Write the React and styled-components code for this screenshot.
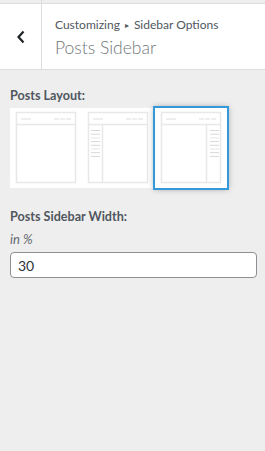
import React, { useState } from 'react'
import styled, { createGlobalStyle } from 'styled-components'

const GlobalStyle = createGlobalStyle`
    html, body {
        margin: 0;
        padding: 0;
        background: #eeeeee;
    }
    body {
        font-family: Lato, "Noto Sans", sans-serif;
        color: #50575e;
    }
`

const Panel = styled.div`
    width: 265px;
    min-height: 451px;
    background: #eeeeee;
`

const Header = styled.div`
    display: flex;
    height: 70px;
    box-sizing: border-box;
    border-bottom: 1px solid #dddddd;
    background: linear-gradient(#eeeeee 0 3px, #dddddd 3px 4px, #ffffff 4px);
`

const BackButton = styled.button`
    width: 42px;
    flex: none;
    padding: 4px 0 0;
    border: 0;
    border-right: 1px solid #dddddd;
    background: transparent;
    display: flex;
    align-items: center;
    justify-content: center;
    cursor: pointer;
`

const TitleBlock = styled.div`
    padding: 16px 0 0 13px;
    display: flex;
    flex-direction: column;
`

const Breadcrumb = styled.span`
    font-size: 12px;
    line-height: 18px;
    color: #50575e;
    white-space: nowrap;
`

const Sep = styled.span`
    font-size: 8px;
    margin: 0 5px;
    vertical-align: 1px;
`

const Title = styled.h3`
    margin: 2px 0 0;
    font-size: 17.5px;
    font-weight: 300;
    line-height: 24px;
    color: #72777c;
`

const Content = styled.div`
    padding: 17px 8px 0 10px;
`

const Control = styled.div`
    margin-bottom: 19px;
`

const Label = styled.div`
    font-size: 12.6px;
    font-weight: 700;
    line-height: 18px;
    color: #50575e;
`

const Description = styled.div`
    font-size: 13px;
    font-style: italic;
    line-height: 18px;
    margin-top: 4px;
    color: #646970;
`

const Choices = styled.div`
    display: flex;
    align-items: flex-start;
    margin-top: 2px;
`

const Choice = styled.label`
    display: block;
    line-height: 0;
    cursor: pointer;
    border: 1px solid ${p => (p.selected ? '#3498db' : 'transparent')};
    box-shadow: ${p => (p.selected ? '0 0 0 1px #3498db, 0 0 6px rgba(0,0,0,0.35)' : 'none')};
    margin: ${p => (p.selected ? '0' : '0 -1px')};
`

const Input = styled.input`
    display: block;
    box-sizing: border-box;
    width: 247px;
    height: 26px;
    margin-top: 4px;
    padding: 0 7px;
    border: 1px solid #8c8f94;
    border-radius: 4px;
    font-family: Lato, "Noto Sans", sans-serif;
    font-size: 14px;
    color: #2c3338;
    background: #fff;
    outline: none;
`

const Chevron = () => (
    <svg width="10" height="14" viewBox="0 0 10 14">
        <path d="M7.5 1.5 L2.5 7 L7.5 12.5" fill="none" stroke="#1d2327" strokeWidth="2.2" />
    </svg>
)

const Thumb = ({ sidebar }) => {
    const lines = [0, 1, 2, 3, 4, 5, 6, 7]
    const sx = sidebar === 'left' ? 20.5 : 51.5
    const lx = sidebar === 'left' ? 9 : 55
    return (
        <svg width="72" height="80" viewBox="0 0 72 80">
            <rect x="0" y="0" width="72" height="80" fill="#fff" />
            <rect x="6.5" y="4.5" width="59" height="70" fill="none" stroke="#e8e8e8" strokeWidth="1.5" />
            <line x1="6.5" y1="16.5" x2="65.5" y2="16.5" stroke="#e8e8e8" strokeWidth="1.5" />
            <line x1="11" y1="11" x2="21" y2="11" stroke="#dcdcdc" strokeWidth="1" />
            <line x1="44" y1="11" x2="49" y2="11" stroke="#dcdcdc" strokeWidth="1" />
            <line x1="50" y1="11" x2="55" y2="11" stroke="#dcdcdc" strokeWidth="1" />
            <line x1="56" y1="11" x2="61" y2="11" stroke="#dcdcdc" strokeWidth="1" />
            {sidebar && (
                <g>
                    <line x1={sx} y1="17" x2={sx} y2="74" stroke="#e8e8e8" strokeWidth="1.5" />
                    {lines.map(i => (
                        <line
                            key={i}
                            x1={lx}
                            y1={22.5 + i * 3.7}
                            x2={lx + 9}
                            y2={22.5 + i * 3.7}
                            stroke={i % 3 === 2 ? '#e6e6e6' : '#d8d8d8'}
                            strokeWidth="1"
                        />
                    ))}
                </g>
            )}
        </svg>
    )
}

const layouts = [
    { id: 'none', sidebar: null },
    { id: 'left', sidebar: 'left' },
    { id: 'right', sidebar: 'right' },
]

const App = () => {
    const [layout, setLayout] = useState('right')
    const [width, setWidth] = useState('30')

    return (
        <Panel>
            <GlobalStyle />
            <Header>
                <BackButton aria-label="Back">
                    <Chevron />
                </BackButton>
                <TitleBlock>
                    <Breadcrumb>
                        Customizing<Sep>▸</Sep>Sidebar Options
                    </Breadcrumb>
                    <Title>Posts Sidebar</Title>
                </TitleBlock>
            </Header>
            <Content>
                <Control>
                    <Label>Posts Layout:</Label>
                    <Choices>
                        {layouts.map(l => (
                            <Choice
                                key={l.id}
                                selected={layout === l.id}
                                onClick={() => setLayout(l.id)}
                            >
                                <Thumb sidebar={l.sidebar} />
                            </Choice>
                        ))}
                    </Choices>
                </Control>
                <Control>
                    <Label>Posts Sidebar Width:</Label>
                    <Description>in %</Description>
                    <Input value={width} onChange={e => setWidth(e.target.value)} />
                </Control>
            </Content>
        </Panel>
    )
}

export default App
